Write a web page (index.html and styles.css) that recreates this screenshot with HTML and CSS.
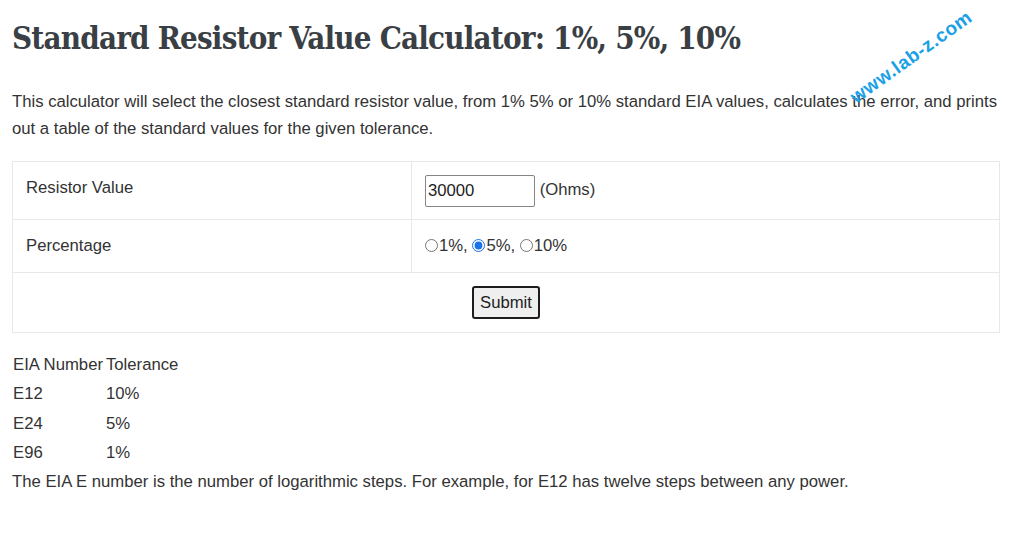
FILE: index.html
```html
<!DOCTYPE html>
<html>
<head>
<meta charset="utf-8">
<link rel="stylesheet" href="styles.css">
</head>
<body>
<div class="page">
  <h1 class="title">Standard Resistor Value Calculator: 1%, 5%, 10%</h1>
  <p class="intro">This calculator will select the closest standard resistor value, from 1% 5% or 10% standard EIA values, calculates the error, and prints out a table of the standard values for the given tolerance.</p>
  <table class="calc">
    <tr class="row-value">
      <td class="label"><span>Resistor Value</span></td>
      <td class="field"><input class="num" type="text" value="30000"> (Ohms)</td>
    </tr>
    <tr class="row-pct">
      <td class="label">Percentage</td>
      <td class="field radios"><input type="radio" name="p">1%, <input type="radio" name="p" checked>5%, <input type="radio" name="p">10%</td>
    </tr>
    <tr class="row-submit">
      <td class="submit-cell" colspan="2"><button class="submit" type="button">Submit</button></td>
    </tr>
  </table>
  <table class="eia">
    <tr><td class="c1">EIA Number</td><td>Tolerance</td></tr>
    <tr><td class="c1">E12</td><td>10%</td></tr>
    <tr><td class="c1">E24</td><td>5%</td></tr>
    <tr><td class="c1">E96</td><td>1%</td></tr>
  </table>
  <p class="note">The EIA E number is the number of logarithmic steps. For example, for E12 has twelve steps between any power.</p>
</div>
<div class="watermark">www.lab-z.com</div>
</body>
</html>
```

FILE: styles.css
```css
html, body {
  margin: 0;
  padding: 0;
  background: #ffffff;
}
body {
  font-family: "Liberation Sans", Arial, sans-serif;
  font-size: 16.7px;
  color: #333333;
  width: 1024px;
  height: 534px;
  overflow: hidden;
  position: relative;
}
.page {
  padding: 0 24px 0 12px;
}
.title {
  font-family: "DejaVu Serif Condensed", "DejaVu Serif", serif;
  font-weight: bold;
  font-size: 31px;
  color: #3a3f45;
  margin: 0;
  padding-top: 18px;
  line-height: 40px;
  letter-spacing: -0.8px;
}
.intro {
  margin: 30px 0 0 0;
  line-height: 27px;
}
.calc {
  margin-top: 19px;
  width: 988px;
  border-collapse: collapse;
  border: 1px solid #e8e8e8;
}
.calc td {
  border: 1px solid #e8e8e8;
  padding: 0 13px;
  vertical-align: middle;
}
.row-value td { height: 57px; }
.row-value .label span { position: relative; top: -3px; }
.row-pct td { height: 52px; }
.row-submit td { height: 59px; }
.calc .label { width: 372px; }
.calc .field { padding-left: 13px; }
.num {
  width: 110px;
  height: 32px;
  box-sizing: border-box;
  font-family: "Liberation Sans", Arial, sans-serif;
  font-size: 16.7px;
  color: #222;
  padding: 1px 2px;
  border: 1px solid #858585;
  border-radius: 2px;
  vertical-align: middle;
  margin: 0;
}
.radios input {
  margin: 0 1px 0 0;
  width: 13px;
  height: 13px;
  vertical-align: -1px;
  accent-color: #1a73e8;
}
.submit-cell { text-align: center; }
.submit {
  font-family: "Liberation Sans", Arial, sans-serif;
  font-size: 16.7px;
  color: #222;
  background: #efefef;
  border: 2px solid #1d1d1d;
  border-radius: 3px;
  width: 68px;
  height: 33px;
  padding: 0;
}
.eia {
  margin-top: 17px;
  border-collapse: collapse;
  margin-left: 1px;
}
.eia td {
  padding: 0;
  height: 29.5px;
  vertical-align: middle;
}
.eia .c1 { width: 93px; }
.note {
  margin: 0;
  line-height: 28px;
}
.watermark {
  position: absolute;
  left: 859px;
  top: 86px;
  font-family: "Liberation Sans", Arial, sans-serif;
  font-weight: bold;
  font-size: 19px;
  line-height: 22px;
  color: #1aa0e6;
  transform: rotate(-35.5deg);
  transform-origin: left bottom;
  letter-spacing: 0.6px;
  white-space: nowrap;
}
```
